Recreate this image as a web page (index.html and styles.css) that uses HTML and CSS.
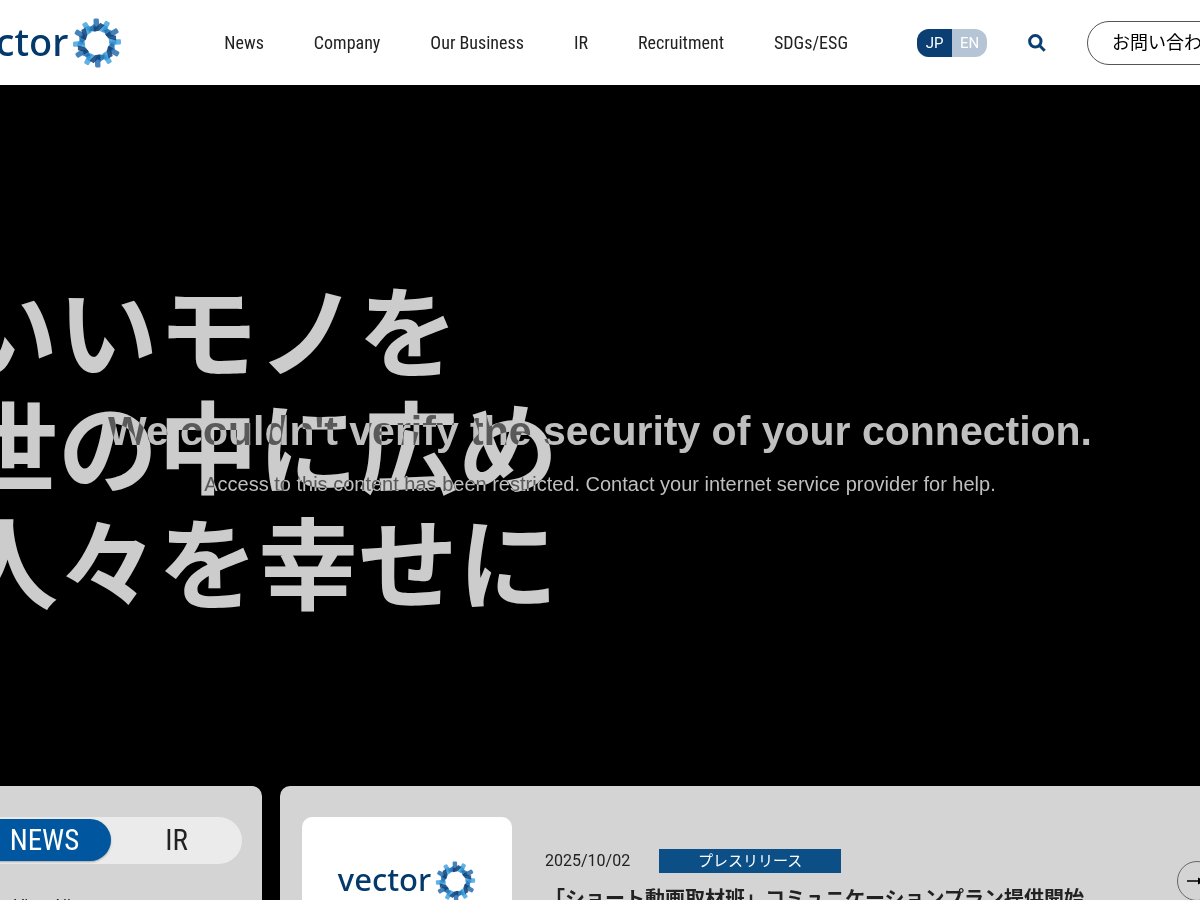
FILE: index.html
```
<!DOCTYPE html>
<html lang="ja">
<head>
    <meta charset="UTF-8">
    <meta name="viewport" content="width=device-width, initial-scale=1.0">
    <title>vector</title>
    <link rel="stylesheet" href="styles.css">
</head>
<body>
    <!-- shared logo ring -->
    <svg class="defs" width="0" height="0" aria-hidden="true">
        <defs>
            <g id="dark">
                <rect x="-2.7" y="-24.5" width="5.4" height="9" rx="1.5" fill="#4583ba"/>
                <path d="M-2.5 -19L2 -15L-1 -11.5L-7 -12.5L-6.5 -16Z" fill="#1f6fb0" opacity=".85"/>
                <path d="M-3 -17L0 -16L4 -20L8 -17.5L2 -12L-3 -11.5Z" fill="#0f3f78" opacity=".85"/>
            </g>
            <g id="light">
                <rect x="-2.7" y="-24" width="5.4" height="9" rx="1.5" fill="#62b2e2"/>
                <path d="M-2.5 -20L2.5 -19L1 -12L-5 -12Z" fill="#3fa0dc" opacity=".85"/>
                <path d="M0 -19L5 -17L3 -12L-1 -13Z" fill="#2f8fd0" opacity=".7"/>
            </g>
            <symbol id="ring" viewBox="-25 -25 50 50">
                <use href="#light" transform="rotate(27)"/>
                <use href="#light" transform="rotate(87)"/>
                <use href="#light" transform="rotate(147)"/>
                <use href="#light" transform="rotate(207)"/>
                <use href="#light" transform="rotate(267)"/>
                <use href="#light" transform="rotate(327)"/>
                <use href="#dark" transform="rotate(-2)"/>
                <use href="#dark" transform="rotate(58)"/>
                <use href="#dark" transform="rotate(118)"/>
                <use href="#dark" transform="rotate(178)"/>
                <use href="#dark" transform="rotate(238)"/>
                <use href="#dark" transform="rotate(298)"/>
            </symbol>
        </defs>
    </svg>

    <header class="header">
        <div class="header-inner">
            <a class="logo" href="#"><span>vector</span><svg class="ring"><use href="#ring"/></svg></a>
            <nav class="nav">
                <a href="#">News</a>
                <a href="#">Company</a>
                <a href="#">Our Business</a>
                <a href="#">IR</a>
                <a href="#">Recruitment</a>
                <a href="#">SDGs/ESG</a>
            </nav>
            <div class="lang">
                <a class="active" href="#">JP</a>
                <a href="#">EN</a>
            </div>
            <button class="search" aria-label="Search">
                <svg width="18" height="18" viewBox="0 0 18 18" fill="none" stroke="#0b3f73" stroke-width="3">
                    <circle cx="7.3" cy="7.3" r="5.7"/>
                    <path d="M11.5 11.5L16.7 16.7"/>
                </svg>
            </button>
            <a class="contact" href="#">お問い合わせ</a>
        </div>
    </header>

    <main class="hero">
        <div class="notice">
            <h2>We couldn't verify the security of your connection.</h2>
            <p>Access to this content has been restricted. Contact your internet service provider for help.</p>
        </div>
        <h1 class="catch">いいモノを<br>世の中に広め<br>人々を幸せに</h1>

        <div class="panels">
            <section class="panel tabs-panel">
                <div class="tabs">
                    <button class="tab active">NEWS</button>
                    <button class="tab">IR</button>
                </div>
                <a class="more" href="#">View All</a>
            </section>
            <section class="panel news-panel">
                <div class="thumb">
                    <div class="logo logo-small"><span>vector</span><svg class="ring"><use href="#ring"/></svg></div>
                </div>
                <article class="news">
                    <div class="meta">
                        <time datetime="2025-10-02">2025/10/02</time>
                        <span class="category">プレスリリース</span>
                    </div>
                    <h3>「ショート動画取材班」コミュニケーションプラン提供開始</h3>
                </article>
                <button class="next" aria-label="Next">
                    <svg width="20" height="12" viewBox="0 0 20 12">
                        <path d="M0 6H14" stroke="#000" stroke-width="1.5"/>
                        <path d="M11 2.5L18 6L11 9.5Z" fill="#000"/>
                    </svg>
                </button>
            </section>
        </div>
    </main>
</body>
</html>
```
FILE: styles.css
```
* {
    box-sizing: border-box;
}

body {
    margin: 0;
    height: 100vh;
    overflow: hidden;
    display: flex;
    flex-direction: column;
    background-color: #000;
    color: #222;
    font-family: "Roboto", "Noto Sans CJK JP", sans-serif;
}

a {
    color: inherit;
    text-decoration: none;
}

button {
    font: inherit;
    color: inherit;
    border: none;
    background: none;
    padding: 0;
    cursor: pointer;
}

.defs {
    position: absolute;
}

/* header */
.header {
    display: flex;
    justify-content: center;
    background-color: #fff;
}

.header-inner {
    flex: none;
    width: 1292px;
    height: 85px;
    display: flex;
    align-items: center;
}

.logo {
    display: flex;
    align-items: center;
    gap: 4px;
    color: #04396c;
    font-family: "Noto Sans", sans-serif;
    font-size: 38px;
    font-weight: 500;
    line-height: 46px;
}

.logo span {
    padding-bottom: 4px;
}

.ring {
    width: 50px;
    height: 50px;
}

.nav {
    display: flex;
    gap: 50px;
    margin-left: 102px;
    font-family: "Roboto Condensed", "Liberation Sans Narrow", sans-serif;
    font-size: 18px;
}

.lang {
    display: flex;
    margin-left: 69px;
    border-radius: 12px;
    overflow: hidden;
    color: #fff;
    background-color: #b5c5d5;
    font-size: 15px;
    line-height: 28px;
    text-align: center;
}

.lang a {
    width: 35px;
}

.lang .active {
    background-color: #0b3f73;
}

.search {
    display: flex;
    margin-left: 41px;
}

.contact {
    margin-left: auto;
    padding: 0 25px 0 24px;
    border: 1px solid #555;
    border-radius: 22px;
    color: #000;
    font-size: 18px;
    line-height: 42px;
}

/* hero */
.hero {
    position: relative;
    flex: 1;
    display: flex;
    flex-direction: column;
    align-items: center;
}

.notice {
    position: absolute;
    top: 319px;
    left: 0;
    right: 0;
    color: #bfbfbf;
    font-family: "Liberation Sans", sans-serif;
    text-align: center;
    white-space: nowrap;
}

.notice h2 {
    margin: 0;
    font-size: 41px;
    line-height: 54px;
}

.notice p {
    margin: 14px 0 0;
    font-size: 20px;
    line-height: 24px;
}

.catch {
    width: 1284px;
    margin: 184px 0 0;
    color: #fff;
    opacity: 0.8;
    mix-blend-mode: difference;
    font-family: "Noto Sans CJK JP", sans-serif;
    font-size: 100px;
    font-weight: 700;
    line-height: 116px;
}

.panels {
    flex: none;
    width: 1292px;
    margin-top: 169px;
    display: flex;
    gap: 18px;
}

.panel {
    height: 190px;
    border-radius: 10px;
    background-color: #d4d4d4;
}

.tabs-panel {
    flex: none;
    width: 308px;
    padding: 31px 20px;
}

.tabs {
    display: flex;
    height: 47px;
    padding: 2px 0;
    border-radius: 24px;
    background-color: #ebebeb;
    font-family: "Roboto Condensed", "Liberation Sans Narrow", sans-serif;
    font-size: 29px;
}

.tab {
    flex: 1;
    height: 42px;
}

.tab.active {
    flex: none;
    width: 137px;
    padding-left: 4px;
    border-radius: 21px;
    background-color: #00569f;
    color: #fff;
    box-shadow: 0 1px 2px rgba(0, 0, 0, 0.3);
}

.more {
    display: block;
    margin: 32px 0 0 40px;
    font-size: 16px;
}

.news-panel {
    flex: 1;
    display: flex;
    padding: 31px 29px 31px 22px;
}

.thumb {
    flex: none;
    width: 210px;
    height: 128px;
    display: flex;
    align-items: center;
    justify-content: center;
    border-radius: 10px;
    background-color: #fff;
}

.logo-small {
    font-size: 31px;
}

.logo-small .ring {
    width: 41px;
    height: 41px;
}

.news {
    flex: 1;
    margin: 32px 0 0 33px;
}

.meta {
    display: flex;
    align-items: center;
    gap: 29px;
    font-size: 16px;
    line-height: 24px;
}

.category {
    width: 182px;
    background-color: #0b4f86;
    color: #fff;
    font-size: 15px;
    text-align: center;
}

.news h3 {
    margin: 10px 0 0;
    font-size: 20px;
    font-weight: 700;
    line-height: 32px;
}

.next {
    flex: none;
    align-self: flex-start;
    display: flex;
    align-items: center;
    justify-content: center;
    width: 40px;
    height: 40px;
    margin-top: 44px;
    border: 1px solid #666;
    border-radius: 50%;
}
```
